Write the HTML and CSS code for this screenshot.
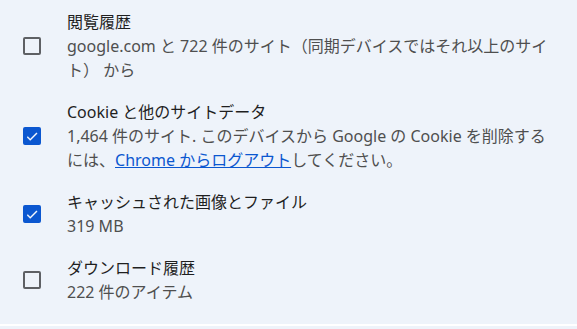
FILE: index.html
```html
<!DOCTYPE html>
<html lang="ja">
<head>
    <meta charset="UTF-8">
    <meta name="viewport" content="width=device-width, initial-scale=1.0">
    <title>閲覧履歴データの削除</title>
    <link rel="stylesheet" href="styles.css">
</head>
<body>
    <div class="panel">
        <!-- 削除する項目 -->
        <div class="item">
            <span class="box"></span>
            <div class="label">
                <div class="title">閲覧履歴</div>
                <div class="desc">google.com と 722 件のサイト（同期デバイスではそれ以上のサイ<br>ト） から</div>
            </div>
        </div>

        <div class="item">
            <span class="box checked">
                <svg viewBox="0 0 24 24"><path d="M9 16.2 4.8 12l-1.4 1.4L9 19 21 7l-1.4-1.4z"/></svg>
            </span>
            <div class="label">
                <div class="title">Cookie と他のサイトデータ</div>
                <div class="desc">1,464 件のサイト. このデバイスから Google の Cookie を削除する<br>には、<a href="#">Chrome からログアウト</a>してください。</div>
            </div>
        </div>

        <div class="item">
            <span class="box checked">
                <svg viewBox="0 0 24 24"><path d="M9 16.2 4.8 12l-1.4 1.4L9 19 21 7l-1.4-1.4z"/></svg>
            </span>
            <div class="label">
                <div class="title">キャッシュされた画像とファイル</div>
                <div class="desc">319 MB</div>
            </div>
        </div>

        <div class="item">
            <span class="box"></span>
            <div class="label">
                <div class="title">ダウンロード履歴</div>
                <div class="desc">222 件のアイテム</div>
            </div>
        </div>
    </div>
    <div class="divider"></div>
</body>
</html>
```

FILE: styles.css
```css
body {
    margin: 0;
    background: #eef3fa;
    font-family: "Noto Sans", "Noto Sans CJK JP", sans-serif;
    font-size: 16px;
    line-height: 24px;
}

.panel {
    display: flex;
    flex-direction: column;
    gap: 18px;
    padding: 10px 0 20px 0;
}

.item {
    display: flex;
    align-items: center;
}

.box {
    width: 18px;
    height: 18px;
    margin-left: 23px;
    margin-right: 26px;
    box-sizing: border-box;
    border: 2px solid #5e6064;
    border-radius: 2px;
    display: flex;
    align-items: center;
    justify-content: center;
    flex-shrink: 0;
}

.box.checked {
    background: #0b57d0;
    border-color: #0b57d0;
}

.box svg {
    width: 17px;
    height: 17px;
    fill: #fff;
    stroke: #fff;
    stroke-width: 0.6;
}

.title {
    color: #1f1f1f;
    white-space: nowrap;
}

.desc {
    color: #4f4f4f;
    white-space: nowrap;
}

.desc a {
    color: #0b57d0;
    text-decoration: underline;
}

.divider {
    height: 2px;
    background: #fff;
}
```
